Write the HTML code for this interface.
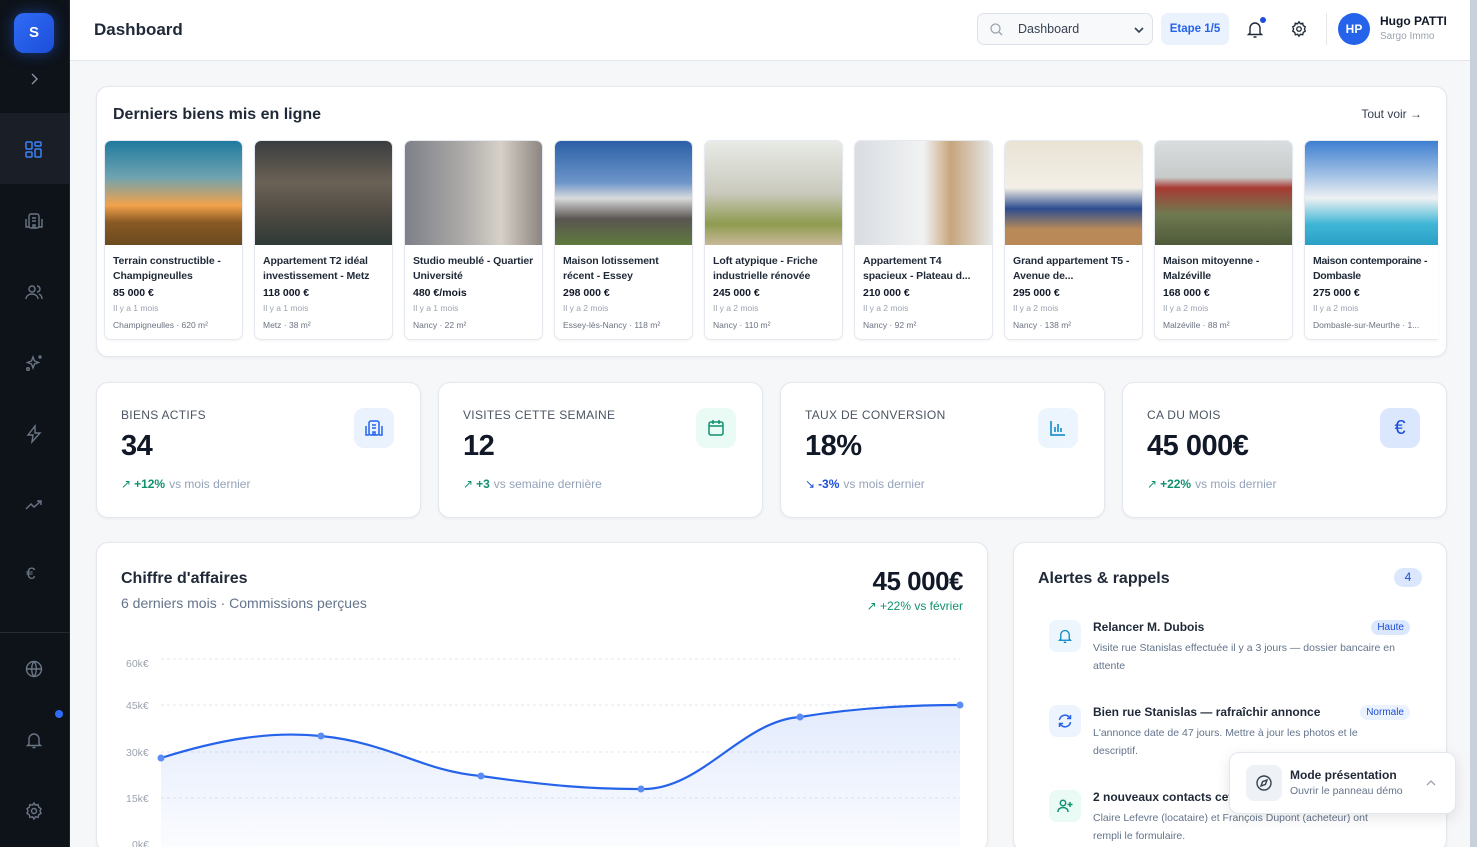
<!DOCTYPE html>
<html style="overflow:hidden;width:1477px;height:847px"><head><meta charset="utf-8"><style>
*{box-sizing:border-box;margin:0;padding:0}
body{width:1477px;height:847px;overflow:hidden;background:#f6f7f9;font-family:"Liberation Sans",sans-serif;color:#111827;position:relative}
.sb{position:absolute;left:0;top:0;width:70px;height:847px;background:#0e131a;border-right:1px solid #1f2630}
.logo{position:absolute;left:14px;top:13px;width:40px;height:40px;border-radius:10px;background:linear-gradient(135deg,#2f6cf6,#1d4ed8);color:#fff;font-weight:700;font-size:15px;text-align:center;line-height:40px;box-shadow:0 0 14px rgba(37,99,235,.5)}
.sbi{position:absolute;left:24px;width:20px;height:20px}
.hd{position:absolute;left:70px;top:0;width:1400px;height:61px;background:#fff;border-bottom:1px solid #e3e7ee}
.scroll{position:absolute;left:1470px;top:0;width:7px;height:847px;background:#c8d0da}
.card{position:absolute;background:#fff;border:1px solid #e3e7ee;border-radius:12px;box-shadow:0 1px 3px rgba(0,0,0,.05)}
.pc{position:absolute;top:140px;width:139px;height:200px;border:1px solid #e6e9ef;border-radius:7px;background:#fff;overflow:hidden;box-shadow:0 1px 2px rgba(0,0,0,.05)}
.pc .im{height:104px}
.pc .t{font-size:10.5px;font-weight:700;line-height:15px;margin:9px 8px 0;color:#1f2937;height:30px;overflow:hidden;letter-spacing:-.1px}
.pc .p{font-size:10.5px;font-weight:700;margin:3px 8px 0;color:#111827}
.pc .a{font-size:8.5px;color:#9ca3af;margin:4px 8px 0}
.pc .l{font-size:8.5px;color:#6b7280;margin:7px 8px 0;white-space:nowrap;overflow:hidden}
.st .lb{position:absolute;left:24px;top:25px;font-size:12px;color:#4b5563;letter-spacing:.3px}
.st .v{position:absolute;left:24px;top:47px;font-size:29px;font-weight:700;color:#111827;letter-spacing:-.5px}
.st .d{position:absolute;left:24px;top:94px;font-size:12px;color:#94a3b8}
.st .d b{color:#0f9170;font-weight:700;margin:0 4px 0 3px}
.st .ic{position:absolute;right:26px;top:25px;width:40px;height:40px;border-radius:10px}
.al{position:absolute;left:1035px;width:380px}
.al .i{position:absolute;left:0;top:0;width:32px;height:32px;border-radius:8px}
.al .tt{position:absolute;left:58px;top:0;font-size:12px;font-weight:700;color:#1f2937}
.al .ds{position:absolute;left:58px;top:19px;font-size:10.5px;line-height:18px;color:#64748b;width:305px}
.al .bd{position:absolute;right:5px;top:0;font-size:10px;border-radius:9px;padding:2px 6px;background:#dbe7fd;color:#1d4ed8}
</style></head><body>
<div class="sb">
<div class="logo">S</div>
<svg style="position:absolute;left:28px;top:72px" width="12" height="14" viewBox="0 0 12 14"><path d="M4 2l5 5-5 5" fill="none" stroke="#8a94a3" stroke-width="1.4"/></svg>
<div style="position:absolute;left:0;top:113px;width:69px;height:71px;background:#1a1f27"></div>
<svg class="sbi" style="top:140px" viewBox="0 0 20 20" fill="none" stroke="#3b82f6" stroke-width="1.5"><rect x="2" y="2" width="6" height="7" rx="1"/><rect x="11" y="2" width="6" height="4" rx="1"/><rect x="2" y="12" width="6" height="5" rx="1"/><rect x="11" y="9" width="6" height="8" rx="1"/></svg>
<svg class="sbi" style="top:211px" viewBox="0 0 20 20" fill="none" stroke="#6b7685" stroke-width="1.4"><rect x="5" y="3" width="10" height="14" rx="2"/><path d="M2 8v8h3M18 8v8h-3M8 7h4M8 10h4M9 17v-3h2v3"/></svg>
<svg class="sbi" style="top:282px" viewBox="0 0 20 20" fill="none" stroke="#6b7685" stroke-width="1.4"><circle cx="8" cy="7" r="3"/><path d="M2 17c0-3 3-5 6-5s6 2 6 5M13 4a3 3 0 010 6M15 12c2 1 3 3 3 5"/></svg>
<svg class="sbi" style="top:353px" viewBox="0 0 20 20" fill="none" stroke="#6b7685" stroke-width="1.4"><path d="M9 4l1.5 4 4 1.5-4 1.5L9 15l-1.5-4-4-1.5 4-1.5z"/><circle cx="4" cy="16" r="1.3"/><circle cx="16" cy="4" r="1"/></svg>
<svg class="sbi" style="top:424px" viewBox="0 0 20 20" fill="none" stroke="#6b7685" stroke-width="1.4"><path d="M11 2L4 11h5l-1 7 8-9h-5z"/></svg>
<svg class="sbi" style="top:495px" viewBox="0 0 20 20" fill="none" stroke="#6b7685" stroke-width="1.4"><path d="M2 14l5-5 3 3 7-6M13 6h4v4"/></svg>
<div style="position:absolute;left:26px;top:564px;color:#6b7685;font-size:17px">€</div>
<div style="position:absolute;left:0;top:632px;width:69px;height:1px;background:#242b35"></div>
<svg class="sbi" style="top:659px" viewBox="0 0 20 20" fill="none" stroke="#6b7685" stroke-width="1.4"><circle cx="10" cy="10" r="7.5"/><path d="M2.5 10h15M10 2.5c-3 3-3 12 0 15M10 2.5c3 3 3 12 0 15"/></svg>
<div style="position:absolute;left:55px;top:710px;width:8px;height:8px;border-radius:50%;background:#2f6cf6"></div>
<svg class="sbi" style="top:730px" viewBox="0 0 20 20" fill="none" stroke="#6b7685" stroke-width="1.4"><path d="M5 14V9a5 5 0 0110 0v5l1.5 1.5h-13zM8.5 17.5h3"/></svg>
<svg class="sbi" style="top:801px" viewBox="0 0 20 20" fill="none" stroke="#6b7685" stroke-width="1.4"><circle cx="10" cy="10" r="2.5"/><path d="M10 2l1.5 2.2 2.6-.6.6 2.6L17 7.7l-1 2.3 1 2.3-2.3 1.5-.6 2.6-2.6-.6L10 18l-1.5-2.2-2.6.6-.6-2.6L3 12.3 4 10 3 7.7l2.3-1.5.6-2.6 2.6.6z"/></svg>
</div>

<div class="hd">
<div style="position:absolute;left:24px;top:20px;font-size:17px;font-weight:700;color:#1f2937">Dashboard</div>
<div style="position:absolute;left:907px;top:13px;width:176px;height:32px;border:1px solid #dde2ea;border-radius:7px;background:#f8f9fb">
<svg style="position:absolute;left:11px;top:8px" width="15" height="15" viewBox="0 0 15 15" fill="none" stroke="#9aa3af" stroke-width="1.3"><circle cx="6.5" cy="6.5" r="4.5"/><path d="M10 10l3 3"/></svg>
<span style="position:absolute;left:40px;top:8px;font-size:12.5px;color:#374151">Dashboard</span>
<svg style="position:absolute;right:8px;top:12px" width="10" height="8" viewBox="0 0 10 8"><path d="M1 2l4 4 4-4" fill="none" stroke="#374151" stroke-width="1.6"/></svg></div>
<div style="position:absolute;left:1091px;top:13px;width:68px;height:32px;border-radius:7px;background:#eaf2fd;color:#2563eb;font-size:11.5px;font-weight:700;text-align:center;line-height:32px">Etape 1/5</div>
<svg style="position:absolute;left:1176px;top:20px" width="18" height="19" viewBox="0 0 18 19" fill="none" stroke="#1f2937" stroke-width="1.4"><path d="M4 13V8a5 5 0 0110 0v5l1.5 1.5h-13zM7.5 17h3"/></svg>
<div style="position:absolute;left:1189px;top:16px;width:8px;height:8px;border-radius:50%;background:#1d4ed8;border:1px solid #fff"></div>
<svg style="position:absolute;left:1220px;top:20px" width="18" height="18" viewBox="0 0 20 20" fill="none" stroke="#1f2937" stroke-width="1.5"><circle cx="10" cy="10" r="2.5"/><path d="M10 2l1.5 2.2 2.6-.6.6 2.6L17 7.7l-1 2.3 1 2.3-2.3 1.5-.6 2.6-2.6-.6L10 18l-1.5-2.2-2.6.6-.6-2.6L3 12.3 4 10 3 7.7l2.3-1.5.6-2.6 2.6.6z"/></svg>
<div style="position:absolute;left:1256px;top:13px;width:1px;height:32px;background:#e5e7eb"></div>
<div style="position:absolute;left:1268px;top:13px;width:32px;height:32px;border-radius:50%;background:#2563eb;color:#fff;font-size:12px;font-weight:700;text-align:center;line-height:32px">HP</div>
<div style="position:absolute;left:1310px;top:14px;font-size:12px;font-weight:700;color:#111827">Hugo PATTI</div>
<div style="position:absolute;left:1310px;top:31px;font-size:10px;color:#9ca3af">Sargo Immo</div>
</div>
<div class="scroll"></div>

<div class="card" style="left:96px;top:86px;width:1351px;height:271px">
<div style="position:absolute;left:16px;top:19px;font-size:16px;font-weight:700;color:#1f2937">Derniers biens mis en ligne</div>
<div style="position:absolute;right:24px;top:20px;font-size:12px;color:#374151">Tout voir →</div>
</div>
<div class="pc" style="left:104px"><div class="im" style="background:linear-gradient(#1f7a9e 0%,#6fa3b0 35%,#f2a24a 62%,#8a5a24 78%,#6b4a1f)"></div><div class="t">Terrain constructible - Champigneulles</div><div class="p">85 000 €</div><div class="a">Il y a 1 mois</div><div class="l">Champigneulles · 620 m²</div></div>
<div class="pc" style="left:254px"><div class="im" style="background:linear-gradient(#3a3d3f,#6b6256 40%,#4f4a43 70%,#2f3a36)"></div><div class="t">Appartement T2 idéal investissement - Metz</div><div class="p">118 000 €</div><div class="a">Il y a 1 mois</div><div class="l">Metz · 38 m²</div></div>
<div class="pc" style="left:404px"><div class="im" style="background:linear-gradient(90deg,#7d8088,#a9a8a6 40%,#d6d0c8 70%,#8d8680)"></div><div class="t">Studio meublé - Quartier Université</div><div class="p">480 €/mois</div><div class="a">Il y a 1 mois</div><div class="l">Nancy · 22 m²</div></div>
<div class="pc" style="left:554px"><div class="im" style="background:linear-gradient(#2b5fa6,#6d95c9 40%,#d9dadb 55%,#5a5551 75%,#5e7a3c)"></div><div class="t">Maison lotissement récent - Essey</div><div class="p">298 000 €</div><div class="a">Il y a 2 mois</div><div class="l">Essey-lès-Nancy · 118 m²</div></div>
<div class="pc" style="left:704px"><div class="im" style="background:linear-gradient(#e8ebe6,#c9c9bd 50%,#8f9b4f 80%,#c8b899)"></div><div class="t">Loft atypique - Friche industrielle rénovée</div><div class="p">245 000 €</div><div class="a">Il y a 2 mois</div><div class="l">Nancy · 110 m²</div></div>
<div class="pc" style="left:854px"><div class="im" style="background:linear-gradient(90deg,#d9dde2,#f1f2f3 50%,#c7a57c 70%,#e6e8ea)"></div><div class="t">Appartement T4 spacieux - Plateau d...</div><div class="p">210 000 €</div><div class="a">Il y a 2 mois</div><div class="l">Nancy · 92 m²</div></div>
<div class="pc" style="left:1004px"><div class="im" style="background:linear-gradient(#e9e3d4,#f3efe6 45%,#2d4d8f 65%,#b98a58 85%)"></div><div class="t">Grand appartement T5 - Avenue de...</div><div class="p">295 000 €</div><div class="a">Il y a 2 mois</div><div class="l">Nancy · 138 m²</div></div>
<div class="pc" style="left:1154px"><div class="im" style="background:linear-gradient(#d9dddf,#c7cbc9 35%,#a83a32 45%,#6f7a50 70%,#4f5a3a)"></div><div class="t">Maison mitoyenne - Malzéville</div><div class="p">168 000 €</div><div class="a">Il y a 2 mois</div><div class="l">Malzéville · 88 m²</div></div>
<div class="pc" style="left:1304px;width:134px;border-right:none;border-radius:7px 0 0 7px"><div class="im" style="background:linear-gradient(#3f7fd1,#a9c6e6 35%,#eef1f3 55%,#3fb6d6 80%,#2b9fc6)"></div><div class="t" style="letter-spacing:-.3px">Maison contemporaine - Dombasle</div><div class="p">275 000 €</div><div class="a">Il y a 2 mois</div><div class="l">Dombasle-sur-Meurthe · 1...</div></div>

<div class="card st" style="left:96px;top:382px;width:325px;height:136px"><div class="lb">BIENS ACTIFS</div><div class="v">34</div><div class="d"><span style="color:#0f9170">↗</span><b>+12%</b>vs mois dernier</div><div class="ic" style="background:#eaf2fd"><svg style="margin:10px" width="20" height="20" viewBox="0 0 20 20" fill="none" stroke="#2563eb" stroke-width="1.5"><rect x="5" y="3" width="10" height="14" rx="2"/><path d="M2 8v9h3M18 8v9h-3M8 7h4M8 10h4M9 17v-3h2v3"/></svg></div></div>
<div class="card st" style="left:438px;top:382px;width:325px;height:136px"><div class="lb">VISITES CETTE SEMAINE</div><div class="v">12</div><div class="d"><span style="color:#0f9170">↗</span><b>+3</b>vs semaine dernière</div><div class="ic" style="background:#eafaf5"><svg style="margin:10px" width="20" height="20" viewBox="0 0 20 20" fill="none" stroke="#0f9170" stroke-width="1.5"><rect x="3" y="4" width="14" height="13" rx="2"/><path d="M3 8h14M7 2v4M13 2v4"/></svg></div></div>
<div class="card st" style="left:780px;top:382px;width:325px;height:136px"><div class="lb">TAUX DE CONVERSION</div><div class="v">18%</div><div class="d"><span style="color:#1d4ed8">↘</span><b style="color:#1d4ed8">-3%</b>vs mois dernier</div><div class="ic" style="background:#ecf5fe"><svg style="margin:10px" width="20" height="20" viewBox="0 0 20 20" fill="none" stroke="#0284c7" stroke-width="1.5"><path d="M3 3v14h14M7 14V9M10 14V6M13 14v-4"/></svg></div></div>
<div class="card st" style="left:1122px;top:382px;width:325px;height:136px"><div class="lb">CA DU MOIS</div><div class="v">45 000€</div><div class="d"><span style="color:#0f9170">↗</span><b>+22%</b>vs mois dernier</div><div class="ic" style="background:#dbe7fd;color:#1d4ed8;font-size:20px;text-align:center;line-height:40px">€</div></div>

<div class="card" style="left:96px;top:542px;width:892px;height:310px;overflow:hidden">
<div style="position:absolute;left:24px;top:27px;font-size:16px;font-weight:700;color:#1f2937">Chiffre d'affaires</div>
<div style="position:absolute;left:24px;top:52px;font-size:14px;color:#64748b">6 derniers mois · Commissions perçues</div>
<div style="position:absolute;right:24px;top:23px;font-size:26px;font-weight:700;color:#111827;letter-spacing:-.5px">45 000€</div>
<div style="position:absolute;right:24px;top:56px;font-size:12px;color:#0f9170">↗ +22% vs février</div>
<svg style="position:absolute;left:0;top:0" width="892" height="320" viewBox="96 542 892 320" font-family="Liberation Sans" font-size="10.5" fill="#9ca3af">
<defs><linearGradient id="g" x1="0" y1="0" x2="0" y2="1"><stop offset="0" stop-color="#2563eb" stop-opacity=".13"/><stop offset="1" stop-color="#2563eb" stop-opacity=".01"/></linearGradient></defs>
<g stroke="#e5e7eb" stroke-dasharray="3 3"><path d="M160 658H959M160 704H959M160 751H959M160 797H959"/></g>
<text x="125" y="666">60k€</text><text x="125" y="708">45k€</text><text x="125" y="755">30k€</text><text x="125" y="801">15k€</text><text x="131" y="847">0k€</text>
<path d="M160 757C220 738 270 730 320 735C390 742 420 770 480 775C550 785 590 788 640 788C700 790 740 720 799 716C860 706 920 704 959 704V860H160Z" fill="url(#g)"/>
<path d="M160 757C220 738 270 730 320 735C390 742 420 770 480 775C550 785 590 788 640 788C700 790 740 720 799 716C860 706 920 704 959 704" fill="none" stroke="#2563eb" stroke-width="2.2"/>
<g fill="#5b8df5"><circle cx="160" cy="757" r="3.5"/><circle cx="320" cy="735" r="3.5"/><circle cx="480" cy="775" r="3.5"/><circle cx="640" cy="788" r="3.5"/><circle cx="799" cy="716" r="3.5"/><circle cx="959" cy="704" r="3.5"/></g>
</svg></div>

<div class="card" style="left:1013px;top:542px;width:434px;height:310px"></div>
<div style="position:absolute;left:1038px;top:570px;font-size:16px;font-weight:700;color:#1f2937">Alertes &amp; rappels</div>
<div style="position:absolute;left:1394px;top:568px;width:28px;height:19px;border-radius:10px;background:#dbe7fd;color:#1d4ed8;font-size:12px;text-align:center;line-height:19px">4</div>
<div class="al" style="top:620px;height:60px"><div class="i" style="left:14px;top:0;background:#eef6fd"><svg style="margin:8px" width="16" height="16" viewBox="0 0 18 19" fill="none" stroke="#0284c7" stroke-width="1.5"><path d="M4 13V8a5 5 0 0110 0v5l1.5 1.5h-13zM7.5 17h3"/></svg></div><div class="tt">Relancer M. Dubois</div><div class="bd">Haute</div><div class="ds">Visite rue Stanislas effectuée il y a 3 jours — dossier bancaire en attente</div></div>
<div class="al" style="top:705px;height:60px"><div class="i" style="left:14px;top:0;background:#eef4fd"><svg style="margin:8px" width="16" height="16" viewBox="0 0 16 16" fill="none" stroke="#2563eb" stroke-width="1.5"><path d="M2.5 7a5.5 5.5 0 019.5-3l1.5 1.5M13.5 9a5.5 5.5 0 01-9.5 3L2.5 10.5M13.5 2v3.5H10M2.5 14v-3.5H6"/></svg></div><div class="tt">Bien rue Stanislas — rafraîchir annonce</div><div class="bd" style="background:#eaf2fd">Normale</div><div class="ds">L'annonce date de 47 jours. Mettre à jour les photos et le descriptif.</div></div>
<div class="al" style="top:790px;height:57px;overflow:hidden"><div class="i" style="left:14px;top:0;background:#eafaf5"><svg style="margin:8px" width="16" height="16" viewBox="0 0 16 16" fill="none" stroke="#0f9170" stroke-width="1.5"><circle cx="6" cy="5" r="2.7"/><path d="M1 14c0-3 2.3-4.5 5-4.5s5 1.5 5 4.5M13 4v5M10.5 6.5h5"/></svg></div><div class="tt">2 nouveaux contacts cette semaine</div><div class="ds">Claire Lefevre (locataire) et François Dupont (acheteur) ont rempli le formulaire.</div></div>

<div style="position:absolute;left:1229px;top:752px;width:227px;height:62px;background:#fff;border:1px solid #e3e7ee;border-radius:10px;box-shadow:0 4px 14px rgba(0,0,0,.1)">
<div style="position:absolute;left:16px;top:12px;width:36px;height:36px;border-radius:8px;background:#eef1f5"><svg style="margin:9px" width="18" height="18" viewBox="0 0 18 18" fill="none" stroke="#374151" stroke-width="1.4"><circle cx="9" cy="9" r="7"/><path d="M12 6l-1.6 4.4L6 12l1.6-4.4z"/></svg></div>
<div style="position:absolute;left:60px;top:15px;font-size:12px;font-weight:700;color:#1f2937">Mode présentation</div>
<div style="position:absolute;left:60px;top:32px;font-size:10.5px;color:#64748b">Ouvrir le panneau démo</div>
<svg style="position:absolute;left:196px;top:26px" width="10" height="7" viewBox="0 0 10 7"><path d="M1 6l4-4 4 4" fill="none" stroke="#9ca3af" stroke-width="1.3"/></svg>
</div>
</body></html>
